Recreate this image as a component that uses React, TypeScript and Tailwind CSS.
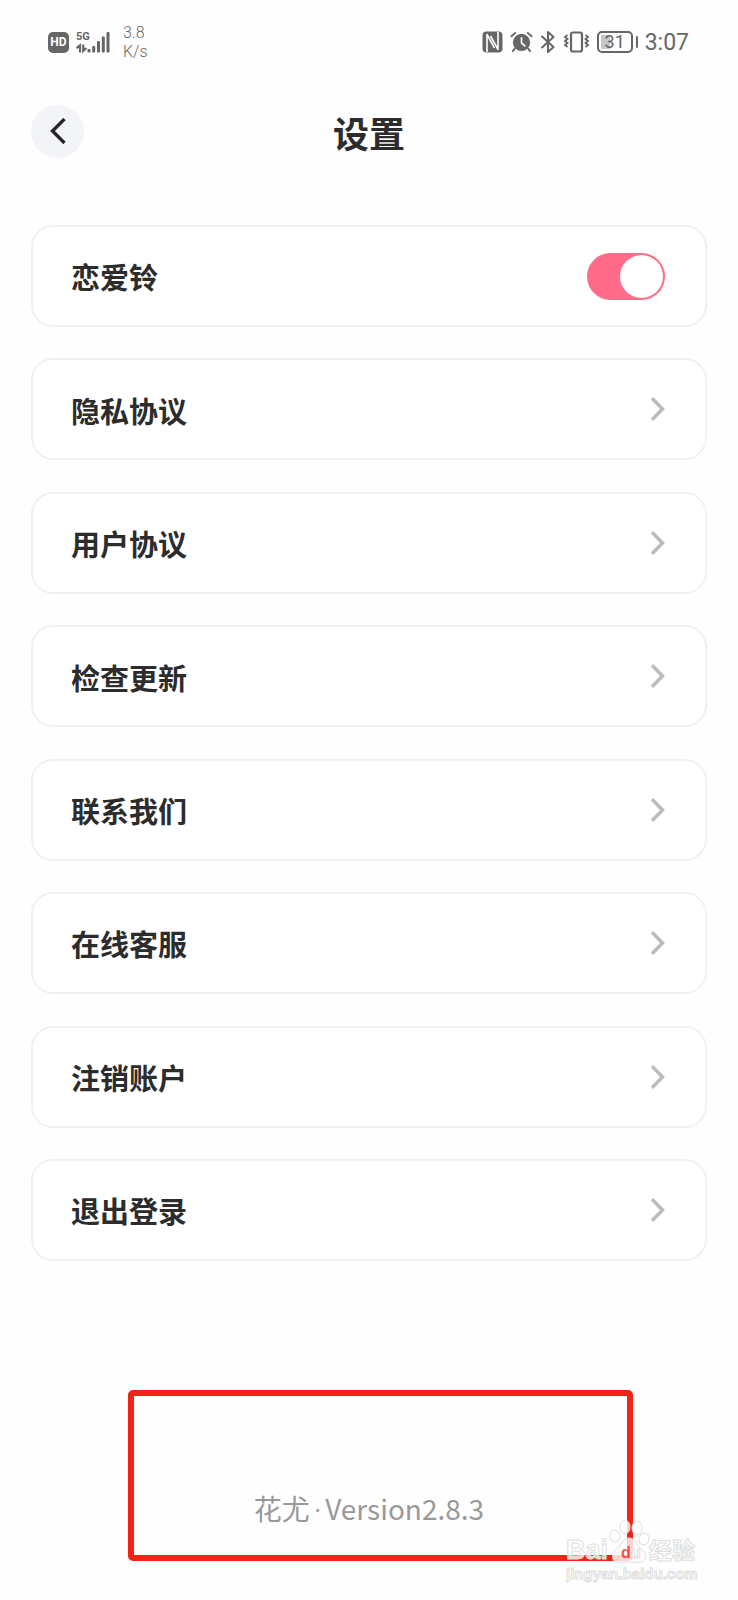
import { useState } from "react";

const links = [
  "隐私协议",
  "用户协议",
  "检查更新",
  "联系我们",
  "在线客服",
  "注销账户",
  "退出登录",
];

const rowClass =
  "flex h-[102px] w-full items-center justify-between rounded-[22px] border-2 border-[#f1f1f1] bg-white pl-[38px] pr-10 text-[29px] font-bold text-[#2c2c2c]";

function SignalIcon() {
  return (
    <svg className="h-6 w-[34px]" viewBox="0 0 34 24" fill="#666" aria-hidden="true">
      <text x="0" y="10" fontSize="11" fontWeight="700" fontFamily="Roboto, sans-serif">
        5G
      </text>
      <path
        d="M0.500 18l3.500-2.500V22.500M7.200 14.500V21l3.300-3"
        fill="none"
        stroke="#666"
        strokeWidth="2.200"
      />
      <rect x="11.500" y="19" width="3" height="3.500" rx="1" />
      <rect x="16.200" y="16" width="3" height="6.500" rx="1" />
      <rect x="21" y="11" width="3" height="11.500" rx="1" />
      <rect x="25.800" y="6.500" width="3" height="16" rx="1" />
      <rect x="30.500" y="2" width="3" height="20.500" rx="1" />
    </svg>
  );
}

function NfcIcon() {
  return (
    <svg className="h-[22px] w-[21px]" viewBox="0 0 21 22" aria-hidden="true">
      <rect x="0.500" y="0.500" width="20" height="21" rx="4" fill="#666" />
      <path
        d="M5 21V3.500L12.500 17M16 1v17.500L8.500 5"
        fill="none"
        stroke="#fff"
        strokeWidth="1.600"
        strokeLinejoin="round"
      />
    </svg>
  );
}

function AlarmIcon() {
  return (
    <svg className="h-[22px] w-[23px]" viewBox="0 0 24 22" fill="none" aria-hidden="true">
      <circle cx="12" cy="11.500" r="9" fill="#666" />
      <path
        d="M1.500 5l4-3.500M22.500 5l-4-3.500M5 18l-2 2.500M19 18l2 2.500"
        stroke="#666"
        strokeWidth="2"
        strokeLinecap="round"
      />
      <path d="M12 6v6l4 3.500" stroke="#fff" strokeWidth="1.800" />
    </svg>
  );
}

function BluetoothIcon() {
  return (
    <svg className="h-6 w-4" viewBox="0 0 16 24" aria-hidden="true">
      <path
        d="M2 6.500l11.500 10.500-5.500 5V2l5.500 5L2 17.500"
        fill="none"
        stroke="#666"
        strokeWidth="2"
        strokeLinejoin="round"
        strokeLinecap="round"
      />
    </svg>
  );
}

function VibrateIcon() {
  return (
    <svg className="h-[22px] w-[27px]" viewBox="0 0 27 22" fill="none" aria-hidden="true">
      <rect x="8" y="1.500" width="11" height="19" rx="2" stroke="#666" strokeWidth="2.200" />
      <path
        d="M4.500 4l-2.500 2 2.500 2-2.500 2 2.500 2-2.500 2 2.500 2M22.500 4l2.500 2-2.500 2 2.500 2-2.500 2 2.500 2-2.500 2"
        stroke="#666"
        strokeWidth="1.800"
      />
    </svg>
  );
}

function StatusBar() {
  return (
    <div className="flex h-[84px] items-center justify-between pl-12 pr-[49px] font-['Roboto',sans-serif] text-[#666]">
      <div className="flex items-center">
        <span className="flex h-[21px] w-[21px] items-center justify-center rounded-[5px] bg-[#666] text-[12px] font-bold text-white">
          HD
        </span>
        <span className="ml-[7px]">
          <SignalIcon />
        </span>
        <span className="ml-[13px] text-[16px] font-light leading-[19px]">
          3.8
          <br />
          K/s
        </span>
      </div>
      <div className="flex items-center gap-[7px]">
        <NfcIcon />
        <AlarmIcon />
        <BluetoothIcon />
        <VibrateIcon />
        <span className="flex items-center gap-[3px]">
          <span className="flex h-[22px] w-9 items-center justify-center rounded-[5px] border-2 border-[#666] bg-linear-to-r from-[#c8c8c8] from-35% to-transparent to-35% bg-clip-content p-[2px] text-[18px] leading-none">
            31
          </span>
          <span className="h-3 w-[2px] rounded-full bg-[#666]" />
        </span>
        <span className="text-[23px] leading-none">3:07</span>
      </div>
    </div>
  );
}

function ChevronRight() {
  return (
    <svg className="h-6 w-[14px]" viewBox="0 0 14 24" aria-hidden="true">
      <path d="M1 1.200L11.500 12 1 22.800" fill="none" stroke="#bcbcbc" strokeWidth="3.500" />
    </svg>
  );
}

function Watermark() {
  return (
    <svg
      className="absolute bottom-3 right-8 h-[68px] w-[140px]"
      viewBox="0 0 140 68"
      fill="#fff"
      fillOpacity="0.800"
      stroke="#dedede"
      strokeWidth="1"
      fontFamily="'Liberation Sans', 'Noto Sans CJK SC', sans-serif"
      role="img"
      aria-label="Baidu 经验"
    >
      <ellipse cx="59" cy="7" rx="5" ry="7" />
      <ellipse cx="71" cy="8" rx="5" ry="7" />
      <ellipse cx="49" cy="16" rx="5" ry="6" transform="rotate(-15 49 16)" />
      <ellipse cx="78" cy="19" rx="5" ry="6" transform="rotate(15 78 19)" />
      <path d="M63 18c6 0 7 5 10 9 4 4 8 7 6 12-2 5-8 3-16 3s-14 2-16-3c-2-5 2-8 6-12 3-4 5-9 10-9z" />
      <text fontWeight="700">
        <tspan x="0" y="39" fontSize="27">
          Bai
        </tspan>
        <tspan x="55" y="38" fontSize="16" fill="#f52314" stroke="none">
          d
        </tspan>
        <tspan x="65" y="38" fontSize="16">
          u
        </tspan>
        <tspan x="83" y="39" fontSize="23">
          经验
        </tspan>
        <tspan x="0" y="59" fontSize="15">
          jingyan.baidu.com
        </tspan>
      </text>
    </svg>
  );
}

export default function App() {
  const [bell, setBell] = useState(true);

  return (
    <div className="flex min-h-screen flex-col bg-[#fefefe] font-['Noto_Sans_CJK_SC',sans-serif]">
      <StatusBar />

      <header className="grid h-[94px] grid-cols-[53px_1fr_53px] items-center px-[31px]">
        <button
          type="button"
          aria-label="返回"
          className="flex h-[53px] w-[53px] items-center justify-center rounded-full bg-[#f3f4f8]"
        >
          <svg className="h-[26px] w-4" viewBox="0 0 16 26" aria-hidden="true">
            <path d="M14.500 1L2.500 13l12 12" fill="none" stroke="#26272b" strokeWidth="3.400" />
          </svg>
        </button>
        <h1 className="pt-[2px] text-center text-[36px] font-bold text-[#2c2c2c]">设置</h1>
      </header>

      <main className="flex flex-1 px-[31px] pt-[47px]">
        <ul className="flex flex-1 flex-col justify-between gap-[31px]">
          <li>
            <label className={rowClass}>
              <span className="pt-[2px]">恋爱铃</span>
              <input
                type="checkbox"
                role="switch"
                checked={bell}
                onChange={(e) => setBell(e.target.checked)}
                className="flex h-[47px] w-[78px] cursor-pointer appearance-none items-center rounded-full bg-[#ddd] p-[2px] before:size-[43px] before:rounded-full before:bg-white checked:justify-end checked:bg-[#ff6b89]"
              />
            </label>
          </li>
          {links.map((label) => (
            <li key={label}>
              <a href="#" className={rowClass}>
                <span className="pt-[2px]">{label}</span>
                <ChevronRight />
              </a>
            </li>
          ))}
        </ul>
      </main>

      <footer className="relative pb-[72px] pt-[227px] text-center text-[28px] leading-10 text-[#999]">
        <div className="absolute bottom-[39px] left-32 right-[105px] h-[171px] rounded-[5px] border-[6px] border-[#f52314]" />
        <p>
          花尤<span className="mx-1 font-['Roboto',sans-serif] leading-none">·</span>Version2.8.3
        </p>
        <Watermark />
      </footer>
    </div>
  );
}
